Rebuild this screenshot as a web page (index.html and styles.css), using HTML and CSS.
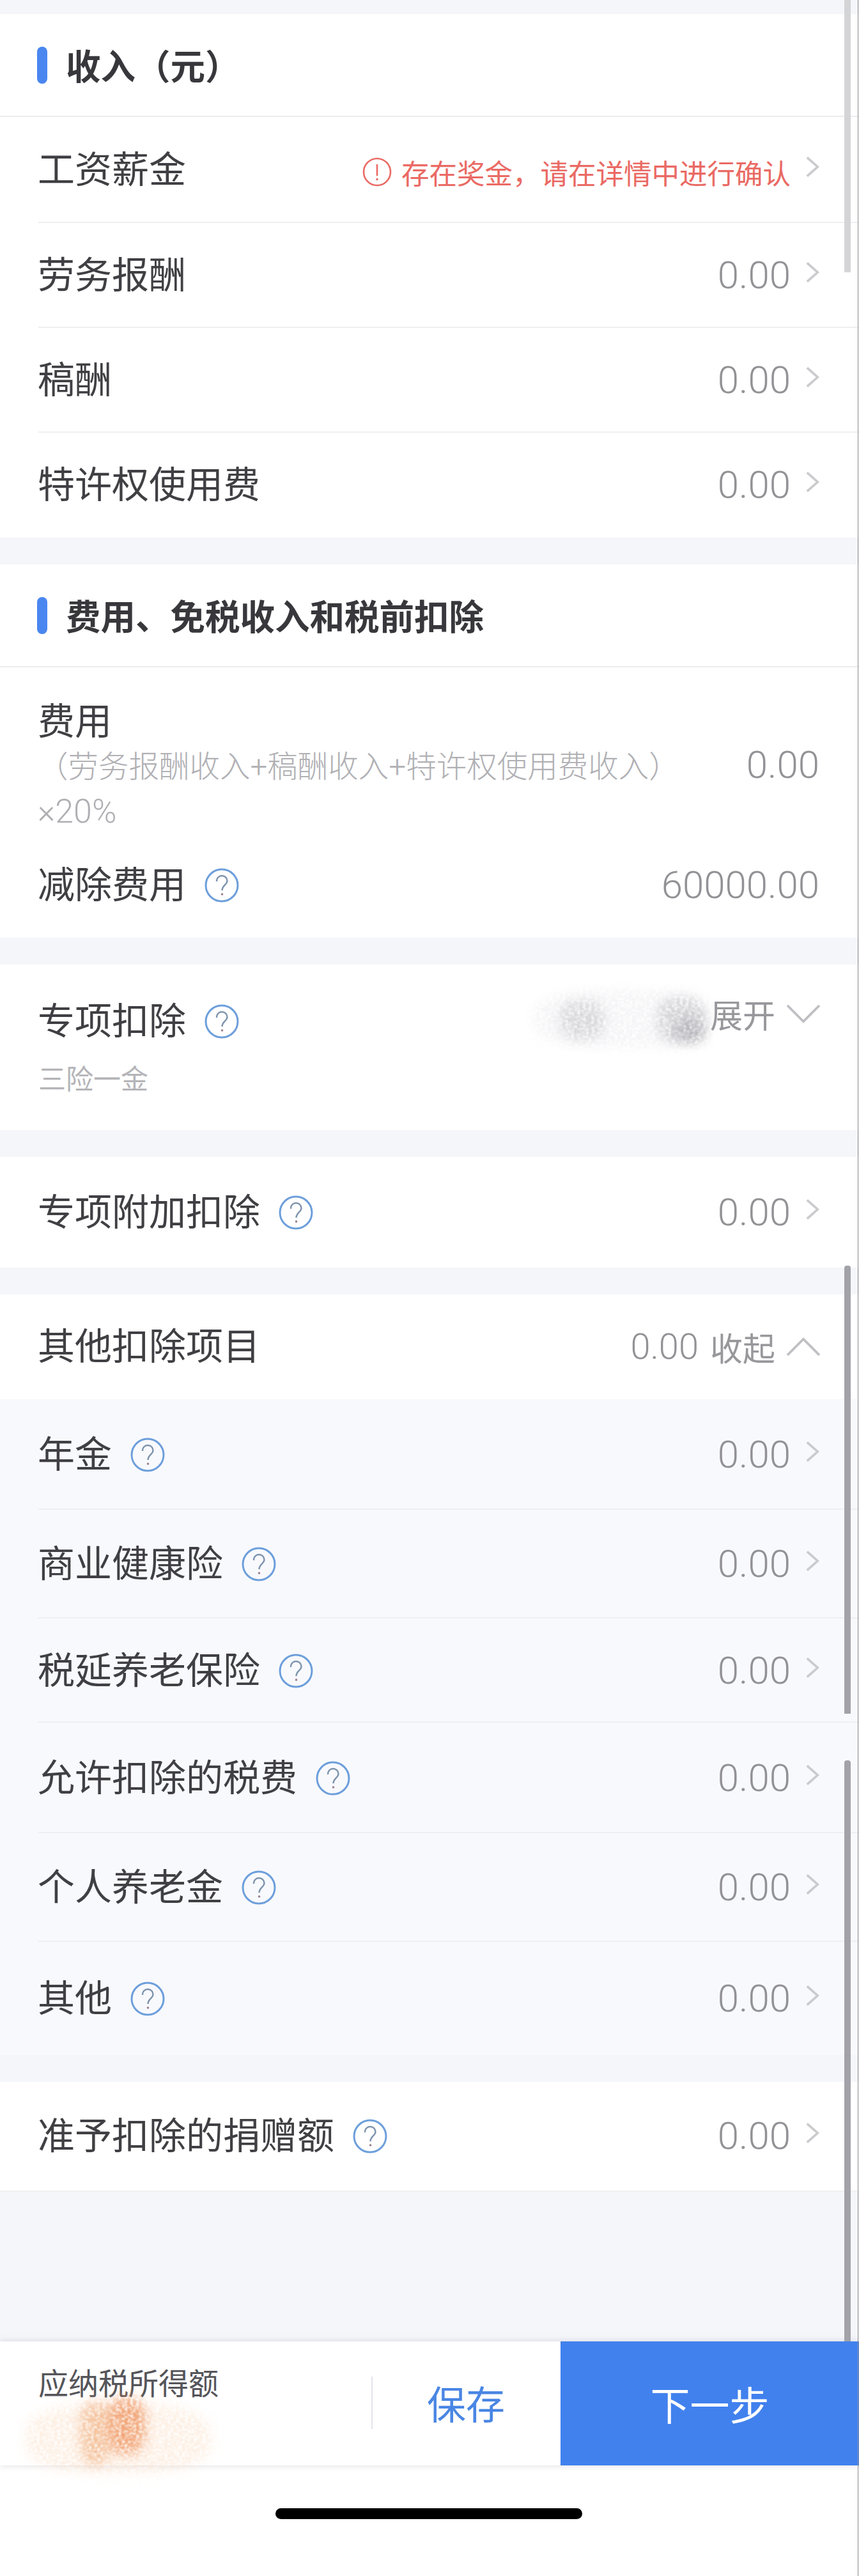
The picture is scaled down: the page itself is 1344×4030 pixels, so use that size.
FILE: index.html
```html
<!DOCTYPE html>
<html lang="zh-CN">
<head>
<meta charset="utf-8">
<title>收入</title>
<link rel="stylesheet" href="styles.css">
</head>
<body>
<svg class="defs" width="0" height="0" aria-hidden="true">
  <filter id="grain" x="-30%" y="-30%" width="160%" height="160%">
    <feGaussianBlur in="SourceGraphic" stdDeviation="9" result="soft"/>
    <feTurbulence type="fractalNoise" baseFrequency="0.22 0.32" numOctaves="2" seed="4" result="noise"/>
    <feColorMatrix in="noise" type="matrix" values="0 0 0 0 0  0 0 0 0 0  0 0 0 0 0  0 0 0 5 -1.800" result="mask"/>
    <feComposite in="soft" in2="mask" operator="in" result="grained"/>
    <feGaussianBlur in="grained" stdDeviation="0.800"/>
  </filter>
  <symbol id="i-right" viewBox="0 0 24 36"><path d="M3 2 L21 18 L3 34" fill="none" stroke="currentColor" stroke-width="4"/></symbol>
  <symbol id="i-down" viewBox="0 0 54 30"><path d="M2 2 L27 27 L52 2" fill="none" stroke="currentColor" stroke-width="3.8"/></symbol>
  <symbol id="i-up" viewBox="0 0 54 30"><path d="M2 28 L27 3 L52 28" fill="none" stroke="currentColor" stroke-width="3.8"/></symbol>
  <symbol id="i-help" viewBox="0 0 54 54"><circle cx="27" cy="27" r="25" fill="none" stroke="#6d9fdb" stroke-width="3"/><path d="M19 21 C19 15 23 12 27 12 C32 12 35.500 15.500 35.500 20 C35.500 26 27.500 27 27.500 35" fill="none" stroke="#7d93ad" stroke-width="2.400"/><circle cx="27.500" cy="41" r="1.800" fill="#9a7d8c"/></symbol>
  <symbol id="i-alert" viewBox="0 0 46 46"><circle cx="23" cy="23" r="21" fill="none" stroke="#ea6a64" stroke-width="2.600"/><path d="M23 11 V29" stroke="#ea6a64" stroke-width="2.600"/><circle cx="23" cy="34.500" r="1.800" fill="#ea6a64"/></symbol>
</svg>
<div class="page">
  <main class="main">
    <section class="card">
      <h2 class="head"><span class="mark"></span>收入（元）</h2>
      <div class="row row-first sep">
        <span class="label">工资薪金</span>
        <span class="side"><svg class="alert"><use href="#i-alert"/></svg><span class="warn">存在奖金，请在详情中进行确认</span><svg class="chev"><use href="#i-right"/></svg></span>
      </div>
      <div class="row sep"><span class="label">劳务报酬</span><span class="side"><span class="value">0.00</span><svg class="chev"><use href="#i-right"/></svg></span></div>
      <div class="row sep"><span class="label">稿酬</span><span class="side"><span class="value">0.00</span><svg class="chev"><use href="#i-right"/></svg></span></div>
      <div class="row"><span class="label">特许权使用费</span><span class="side"><span class="value">0.00</span><svg class="chev"><use href="#i-right"/></svg></span></div>
    </section>

    <section class="card gap fee-card">
      <h2 class="head"><span class="mark"></span>费用、免税收入和税前扣除</h2>
      <div class="fee">
        <div class="fee-text">
          <div class="fee-label">费用</div>
          <div class="fee-note">（劳务报酬收入+稿酬收入+特许权使用费收入）<span class="note-rate">×20%</span></div>
        </div>
        <span class="value">0.00</span>
      </div>
      <div class="row-deduct"><span class="label">减除费用</span><svg class="help"><use href="#i-help"/></svg><span class="value push">60000.00</span></div>
    </section>

    <section class="card gap special">
      <div class="special-top">
        <span class="label">专项扣除</span><svg class="help"><use href="#i-help"/></svg>
        <span class="side push lift"><span class="unit">展开</span><svg class="chev-wide"><use href="#i-down"/></svg></span>
      </div>
      <div class="special-note">三险一金</div>
      <span class="smudge smudge-c"></span>
      <span class="smudge smudge-a"></span>
      <span class="smudge smudge-b"></span>
      <span class="smudge smudge-d"></span>
    </section>

    <section class="card gap">
      <div class="row row-single"><span class="label">专项附加扣除</span><svg class="help"><use href="#i-help"/></svg><span class="side push"><span class="value">0.00</span><svg class="chev"><use href="#i-right"/></svg></span></div>
    </section>

    <section class="card gap">
      <div class="row row-other"><span class="label">其他扣除项目</span><span class="side push"><span class="value mid">0.00</span><span class="unit unit-gap">收起</span><svg class="chev-wide"><use href="#i-up"/></svg></span></div>
      <div class="sub">
        <div class="row sep h173"><span class="label">年金</span><svg class="help"><use href="#i-help"/></svg><span class="side push"><span class="value">0.00</span><svg class="chev"><use href="#i-right"/></svg></span></div>
        <div class="row sep h170"><span class="label">商业健康险</span><svg class="help"><use href="#i-help"/></svg><span class="side push"><span class="value">0.00</span><svg class="chev"><use href="#i-right"/></svg></span></div>
        <div class="row sep h163"><span class="label">税延养老保险</span><svg class="help"><use href="#i-help"/></svg><span class="side push"><span class="value">0.00</span><svg class="chev"><use href="#i-right"/></svg></span></div>
        <div class="row sep h173"><span class="label">允许扣除的税费</span><svg class="help"><use href="#i-help"/></svg><span class="side push"><span class="value">0.00</span><svg class="chev"><use href="#i-right"/></svg></span></div>
        <div class="row sep h170"><span class="label">个人养老金</span><svg class="help"><use href="#i-help"/></svg><span class="side push"><span class="value">0.00</span><svg class="chev"><use href="#i-right"/></svg></span></div>
        <div class="row h177"><span class="label">其他</span><svg class="help"><use href="#i-help"/></svg><span class="side push"><span class="value">0.00</span><svg class="chev"><use href="#i-right"/></svg></span></div>
      </div>
    </section>

    <section class="card gap">
      <div class="row row-donate"><span class="label">准予扣除的捐赠额</span><svg class="help"><use href="#i-help"/></svg><span class="side push"><span class="value">0.00</span><svg class="chev"><use href="#i-right"/></svg></span></div>
    </section>
  </main>

  <footer class="footer">
    <div class="tax"><div class="tax-label">应纳税所得额</div></div>
    <div class="save-wrap"><span class="divider"></span><span class="save">保存</span></div>
    <div class="next">下一步</div>
  </footer>
  <div class="home"><span class="home-bar"></span></div>

  <span class="smudge smudge-o1"></span>
  <span class="smudge smudge-o2"></span>
  <span class="smudge smudge-o3"></span>
  <span class="scroll scroll-a"></span>
  <span class="scroll scroll-b"></span>
  <span class="scroll scroll-c"></span>
  <span class="edge"></span>
</div>
</body>
</html>
```

FILE: styles.css
```css
* { box-sizing: border-box; }
html, body { margin: 0; padding: 0; background: #fff; }
body {
  font-family: "Noto Sans CJK SC", "Noto Sans", sans-serif;
  color: #404044;
}
.defs { position: absolute; }
.page { position: relative; width: 1344px; height: 4030px; overflow: hidden; background: #fff; }
.main { height: 3663px; padding-top: 22px; background: #f5f6fa; }
.card { position: relative; background: #fff; }
.gap { margin-top: 42px; }

.head {
  display: flex; align-items: center; height: 161px; margin: 0;
  padding-left: 58px; font-size: 54.500px; font-weight: 600; line-height: 1; color: #38383c;
  border-bottom: 2px solid #ececee;
}
.mark { width: 16px; height: 58px; margin-right: 29px; border-radius: 8px; background: #4a86f0; }

.row {
  position: relative; display: flex; align-items: center; justify-content: space-between;
  height: 164px; padding: 0 62px 0 59px;
}
.row.sep::after {
  content: ""; position: absolute; left: 60px; right: 0; bottom: 0; height: 2px; background: #efeff1;
}
.row-first { height: 166px; }
.row-single { height: 173px; justify-content: flex-start; }
.row-other { height: 164px; padding-right: 60px; }
.row-donate { height: 172px; justify-content: flex-start; border-bottom: 2px solid #f0f0f2; }
.h163 { height: 163px; justify-content: flex-start; }
.h170 { height: 170px; justify-content: flex-start; }
.h173 { height: 173px; justify-content: flex-start; }
.h177 { height: 177px; justify-content: flex-start; }
.sub { background: #f8f9fd; }

.label { padding-bottom: 10px; font-size: 58px; line-height: 72px; color: #404044; white-space: nowrap; }
.value { font-family: Roboto, "Noto Sans CJK SC", sans-serif; font-size: 60px; font-weight: 300; line-height: 72px; color: #929296; white-space: nowrap; }
.value.mid { font-size: 56px; }
.unit { font-size: 51px; line-height: 72px; color: #98989c; white-space: nowrap; }
.unit-gap { margin-left: 18px; }
.warn { font-size: 43.500px; line-height: 60px; color: #ea6a64; white-space: nowrap; position: relative; top: 4px; }
.side { display: flex; align-items: center; }
.push { margin-left: auto; }
.lift { position: relative; top: -12px; }

.chev { width: 22px; height: 36px; margin-left: 23px; color: #cbcbce; position: relative; top: -5px; }
.chev-wide { width: 54px; height: 30px; margin-left: 17px; color: #bfbfc4; }
.alert { width: 46px; height: 46px; margin-right: 15px; position: relative; top: 3px; }
.help { width: 54px; height: 54px; margin-left: 29px; flex: none; }

.fee { display: flex; align-items: center; justify-content: space-between; padding: 44px 62px 0 59px; }
.fee-text { width: 1090px; }
.fee-label { font-size: 58px; line-height: 72px; color: #404044; }
.fee-note { margin-top: 5px; font-family: Roboto, "Noto Sans CJK SC", sans-serif; font-size: 47.500px; font-weight: 300; line-height: 70px; color: #b0b0b4; }
.note-rate { font-size: 52px; }
.fee-card { padding-bottom: 4px; }
.row-deduct { display: flex; align-items: center; height: 157px; padding: 0 62px 0 59px; }

.special { height: 259px; }
.special-top { display: flex; align-items: center; padding: 48px 60px 0 59px; }
.special-note { margin-top: 16px; padding-left: 60px; font-size: 43px; line-height: 60px; color: #b4b4b8; }

.smudge { position: absolute; display: block; border-radius: 38%; filter: url(#grain); pointer-events: none; }
.smudge-c { left: 835px; top: 40px; width: 270px; height: 90px; background: rgba(228,228,232,.4); }
.smudge-a { left: 876px; top: 56px; width: 70px; height: 62px; background: rgba(185,185,190,.55); }
.smudge-b { left: 1028px; top: 50px; width: 78px; height: 74px; background: rgba(185,185,190,.6); }
.smudge-d { left: 1056px; top: 84px; width: 46px; height: 38px; background: rgba(150,150,158,.6); }
.smudge-o1 { left: 40px; top: 3760px; width: 290px; height: 110px; background: rgba(250,215,185,.4); }
.smudge-o2 { left: 125px; top: 3756px; width: 50px; height: 100px; background: rgba(240,175,125,.75); }
.smudge-o3 { left: 168px; top: 3750px; width: 60px; height: 90px; background: rgba(238,145,90,.85); }

.footer { position: relative; display: flex; height: 194px; background: #fff; box-shadow: 0 0 10px rgba(120,120,130,.25); }
.tax { width: 581px; padding: 34px 0 0 60px; }
.tax-label { font-size: 47px; line-height: 58px; color: #55555a; white-space: nowrap; }
.save-wrap { position: relative; display: flex; align-items: center; justify-content: center; width: 296px; }
.divider { position: absolute; left: 0; top: 55px; width: 2px; height: 82px; background: #e2e4ea; }
.save { font-size: 61px; line-height: 1; color: #4a86e4; position: relative; top: -2px; }
.next {
  display: flex; align-items: center; justify-content: center; width: 467px;
  font-size: 62px; color: #fff; background: #4181ee;
}
.home { display: flex; justify-content: center; padding-top: 67px; }
.home-bar { display: block; width: 480px; height: 17px; margin-right: 2px; border-radius: 9px; background: #000; }

.scroll { position: absolute; left: 1321px; width: 10px; }
.scroll-a { top: 0; height: 426px; background: #d4d4d6; }
.scroll-b { top: 1980px; height: 701px; background: #a2a2a8; border-radius: 4px 4px 0 0; }
.scroll-c { top: 2754px; height: 909px; background: #a2a2a8; border-radius: 4px 4px 0 0; }
.edge { position: absolute; left: 1342px; top: 0; width: 1px; height: 4030px; background: #8f8f92; }
```
